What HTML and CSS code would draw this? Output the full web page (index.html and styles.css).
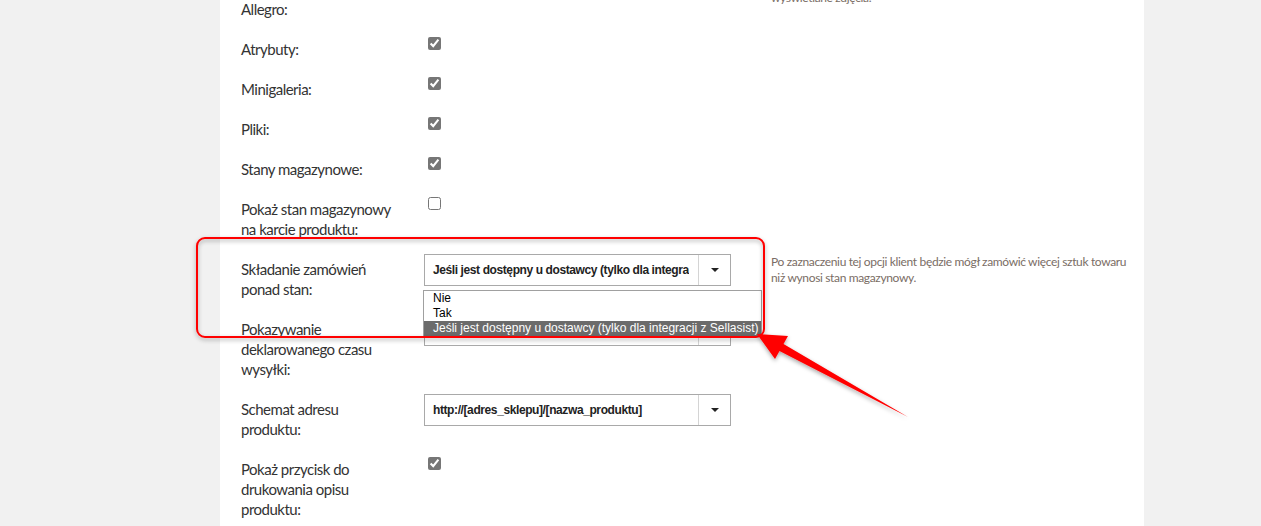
FILE: index.html
```html
<!DOCTYPE html>
<html lang="pl">
<head>
  <meta charset="UTF-8" />
  <meta name="viewport" content="width=device-width, initial-scale=1" />
  <title>Ustawienia produktu</title>
  <link rel="stylesheet" href="styles.css">
</head>
<body>
  <div class="panel">
    <div class="row">
      <label class="row-label">Importuj zdjęcia z<br>Allegro:</label>
      <div class="row-field"><input type="checkbox" checked></div>
      <div class="row-help">Zaznacz, jeśli przy aukcjach mają być<br>wyświetlane zdjęcia.</div>
    </div>
    <div class="row">
      <label class="row-label">Atrybuty:</label>
      <div class="row-field"><input type="checkbox" checked></div>
      <div class="row-help"></div>
    </div>
    <div class="row">
      <label class="row-label">Minigaleria:</label>
      <div class="row-field"><input type="checkbox" checked></div>
      <div class="row-help"></div>
    </div>
    <div class="row">
      <label class="row-label">Pliki:</label>
      <div class="row-field"><input type="checkbox" checked></div>
      <div class="row-help"></div>
    </div>
    <div class="row">
      <label class="row-label">Stany magazynowe:</label>
      <div class="row-field"><input type="checkbox" checked></div>
      <div class="row-help"></div>
    </div>
    <div class="row">
      <label class="row-label">Pokaż stan magazynowy na karcie produktu:</label>
      <div class="row-field"><input type="checkbox"></div>
      <div class="row-help"></div>
    </div>
    <div class="row">
      <label class="row-label">Składanie zamówień ponad stan:</label>
      <div class="row-field">
        <div class="select open">
          <span class="select-value">Jeśli jest dostępny u dostawcy (tylko dla integracji z Sellasist)</span>
          <span class="select-arrow"></span>
          <ul class="select-list">
            <li>Nie</li>
            <li>Tak</li>
            <li class="active">Jeśli jest dostępny u dostawcy (tylko dla integracji z Sellasist)</li>
          </ul>
        </div>
      </div>
      <div class="row-help">Po zaznaczeniu tej opcji klient będzie mógł zamówić więcej sztuk towaru niż wynosi stan magazynowy.</div>
    </div>
    <div class="row">
      <label class="row-label">Pokazywanie deklarowanego czasu wysyłki:</label>
      <div class="row-field">
        <div class="select">
          <span class="select-value">Nie</span>
          <span class="select-arrow"></span>
        </div>
      </div>
      <div class="row-help"></div>
    </div>
    <div class="row">
      <label class="row-label">Schemat adresu produktu:</label>
      <div class="row-field">
        <div class="select">
          <span class="select-value">http://[adres_sklepu]/[nazwa_produktu]</span>
          <span class="select-arrow"></span>
        </div>
      </div>
      <div class="row-help"></div>
    </div>
    <div class="row">
      <label class="row-label">Pokaż przycisk do drukowania opisu produktu:</label>
      <div class="row-field"><input type="checkbox" checked></div>
      <div class="row-help"></div>
    </div>
  </div>

  <!-- red markup drawn over the form -->
  <svg class="markup" width="1261" height="526" viewBox="0 0 1261 526">
    <defs>
      <filter id="soft" x="-10%" y="-10%" width="120%" height="130%">
        <feDropShadow dx="0" dy="2" stdDeviation="2" flood-color="#000" flood-opacity="0.35"/>
      </filter>
    </defs>
    <rect x="197" y="238" width="567" height="99" rx="8" ry="8" fill="none" stroke="#ff0000" stroke-width="2" filter="url(#soft)"/>
    <polygon points="757,334 788,336 783.5,344 908,417 779.5,351 775,359" fill="#ff0000" filter="url(#soft)"/>
  </svg>
</body>
</html>
```

FILE: styles.css
```css
/* Page */
html, body {
  margin: 0;
  padding: 0;
}
body {
  background: #f1f1f1;
  font-family: Lato, "Liberation Sans", sans-serif;
  color: #333;
}
.panel {
  width: 903px;
  margin: -26px 0 0 220px;
  padding: 0 0 60px 21px;
  background: #fff;
  display: flex;
  flex-direction: column;
  gap: 15px;
}

/* Form rows: label | field | help */
.row {
  display: grid;
  grid-template-columns: 160px 307px 380px;
  column-gap: 23px;
  align-items: start;
}
.row-label {
  padding-top: 5px;
  font-size: 15px;
  line-height: 20px;
  letter-spacing: -0.5px;
  color: #333;
}
.row-field {
  position: relative;
}
.row-field input[type="checkbox"] {
  width: 13px;
  height: 13px;
  margin: 3px 3px 3px 4px;
  accent-color: #767676;
  display: block;
}
.row-help {
  padding-left: 17px;
  font-size: 12px;
  line-height: 16px;
  letter-spacing: -0.35px;
  color: #7a6d65;
}

/* Select box */
.select {
  position: relative;
  display: flex;
  height: 32px;
  box-sizing: border-box;
  border: 1px solid #a9a9a9;
  background: #fff;
}
.select-value {
  flex: 1;
  margin-right: 9px;
  padding-left: 8px;
  line-height: 30px;
  font-family: "Liberation Sans", Arial, sans-serif;
  font-size: 12px;
  font-weight: bold;
  letter-spacing: -0.4px;
  color: #222;
  white-space: nowrap;
  overflow: hidden;
}
.select-arrow {
  width: 31px;
  border-left: 1px solid #d4d4d4;
  position: relative;
}
.select-arrow::after {
  content: "";
  position: absolute;
  left: 12px;
  top: 13px;
  border-left: 4px solid transparent;
  border-right: 4px solid transparent;
  border-top: 4px solid #222;
}

/* Open option list */
.select-list {
  position: absolute;
  left: -2px;
  top: 35px;
  z-index: 2;
  width: 339px;
  box-sizing: border-box;
  margin: 0;
  padding: 0;
  list-style: none;
  background: #fff;
  border: 1px solid #a0a0a0;
  font-family: "Liberation Sans", Arial, sans-serif;
  font-size: 12px;
  letter-spacing: 0;
  color: #000;
}
.select-list li {
  padding: 0 0 0 9px;
  line-height: 15px;
  white-space: nowrap;
}
.select-list li.active {
  background: #6b6b6b;
  color: #fff;
}

/* Markup layer */
.markup {
  position: absolute;
  top: 0;
  left: 0;
  pointer-events: none;
  z-index: 5;
}
```
